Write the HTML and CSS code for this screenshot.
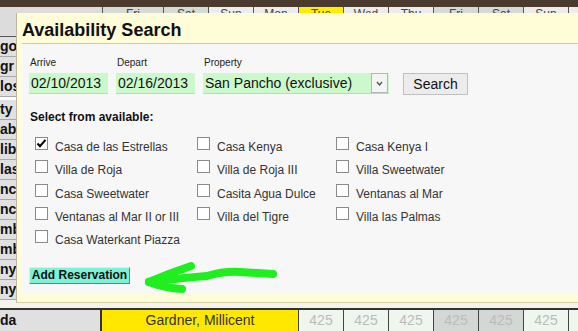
FILE: index.html
```
<!DOCTYPE html>
<html lang="en">

<head>
    <meta charset="utf-8" />
    <title>Availability Search</title>
    <link rel="stylesheet" href="styles.css">
</head>

<body>
    <div class="sheet">
        <div class="topbar"></div>
        <div class="head">
            <div class="corner"></div>
            <div class="day wide wk">Fri</div>
            <div class="day wk">Sat</div>
            <div class="day">Sun</div>
            <div class="day">Mon</div>
            <div class="day today">Tue</div>
            <div class="day">Wed</div>
            <div class="day">Thu</div>
            <div class="day wk">Fri</div>
            <div class="day wk">Sat</div>
            <div class="day">Sun</div>
            <div class="day"></div>
        </div>
        <div class="rows">
            <div class="row"><div class="name">go</div></div>
            <div class="row"><div class="name">gr</div></div>
            <div class="row"><div class="name">los</div></div>
            <div class="row group green"><div class="name">ty</div></div>
            <div class="row"><div class="name">ab</div></div>
            <div class="row"><div class="name">lib</div></div>
            <div class="row"><div class="name">las</div></div>
            <div class="row green"><div class="name">nc</div></div>
            <div class="row"><div class="name">nc</div></div>
            <div class="row"><div class="name">mb</div></div>
            <div class="row"><div class="name">mb</div></div>
            <div class="row green"><div class="name">nya</div></div>
            <div class="row"><div class="name">nya</div></div>
        </div>
        <div class="filler"></div>
        <div class="bottom">
            <div class="name">da</div>
            <div class="guest">Gardner, Millicent</div>
            <div class="rate">425</div>
            <div class="rate">425</div>
            <div class="rate">425</div>
            <div class="rate wk">425</div>
            <div class="rate wk">425</div>
            <div class="rate">425</div>
            <div class="rate">425</div>
        </div>
    </div>

    <div class="dialog">
        <h1 class="dialog-title">Availability Search</h1>
        <div class="panel">
            <div class="fields">
                <div class="field">
                    <label>Arrive</label>
                    <input class="date" type="text" value="02/10/2013">
                </div>
                <div class="field">
                    <label>Depart</label>
                    <input class="date" type="text" value="02/16/2013">
                </div>
                <div class="field">
                    <label>Property</label>
                    <div class="pick">
                        <select>
                            <option>San Pancho (exclusive)</option>
                        </select>
                        <span class="arrow">
                            <svg width="7" height="5" viewBox="0 0 7 5"><path d="M1 1 L3.5 4 L6 1" fill="none" stroke="#555" stroke-width="1.4"/></svg>
                        </span>
                    </div>
                </div>
                <button class="search">Search</button>
            </div>

            <div class="heading">Select from available:</div>
            <div class="choices">
                <label class="choice"><span class="box"><svg width="11" height="11" viewBox="0 0 11 11"><path d="M1.5 5.5 L4 8.2 L9.5 1.8" fill="none" stroke="#000" stroke-width="2"/></svg></span>Casa de las Estrellas</label>
                <label class="choice"><span class="box"></span>Casa Kenya</label>
                <label class="choice"><span class="box"></span>Casa Kenya I</label>
                <label class="choice"><span class="box"></span>Villa de Roja</label>
                <label class="choice"><span class="box"></span>Villa de Roja III</label>
                <label class="choice"><span class="box"></span>Villa Sweetwater</label>
                <label class="choice"><span class="box"></span>Casa Sweetwater</label>
                <label class="choice"><span class="box"></span>Casita Agua Dulce</label>
                <label class="choice"><span class="box"></span>Ventanas al Mar</label>
                <label class="choice"><span class="box"></span>Ventanas al Mar II or III</label>
                <label class="choice"><span class="box"></span>Villa del Tigre</label>
                <label class="choice"><span class="box"></span>Villa las Palmas</label>
                <label class="choice"><span class="box"></span>Casa Waterkant Piazza</label>
            </div>

            <button class="add">Add Reservation</button>
        </div>
    </div>

    <!-- marker scribbled on the screenshot -->
    <svg class="marker" width="145" height="40" viewBox="0 0 145 40">
        <g fill="none" stroke="#1fee1f" stroke-width="8" stroke-linecap="round" stroke-linejoin="round">
            <path d="M9 24 Q40 20 67 18 Q84 13 100 14 L133 16"/>
            <path d="M9 24 Q30 15 51 8"/>
            <path d="M9 24 Q25 30 42 31"/>
        </g>
    </svg>
</body>

</html>
```

FILE: styles.css
```
* {
    box-sizing: border-box;
}

html,
body {
    margin: 0;
    height: 100%;
}

body {
    width: 578px;
    height: 331px;
    position: relative;
    overflow: hidden;
    background: #fff;
    font-family: "Liberation Sans", Arial, sans-serif;
}

.sheet {
    height: 331px;
}

.topbar {
    height: 7px;
    background: #4b3a2e;
}

.head {
    display: flex;
    height: 30px;
    border-bottom: 1px solid #555;
}

.corner {
    width: 102px;
    flex: none;
    background: #dcdcdc;
}

.day {
    width: 45px;
    flex: none;
    border-left: 1px solid #555;
    background: #ececec;
    color: #444;
    font-size: 12px;
    line-height: 14px;
    text-align: center;
}

.day.wide {
    width: 61px;
}

.day.wk {
    background: #d6dad6;
}

.day.today {
    background: #ffee00;
}

.row {
    display: flex;
    height: 20px;
    border-bottom: 1px solid #a8a8a8;
}

.row.group {
    height: 23px;
    padding-top: 3px;
}

.row.green {
    border-bottom-color: #7cc47c;
}

.name {
    width: 102px;
    flex: none;
    background: #e0e0e0;
    border-right: 2px solid #333;
    color: #111;
    font-size: 14px;
    font-weight: bold;
    line-height: 19px;
    white-space: nowrap;
    overflow: hidden;
}

.filler {
    height: 8px;
    background: #f6f4ea;
}

.bottom {
    display: flex;
    height: 23px;
    border-top: 2px solid #333;
}

.bottom .name {
    line-height: 21px;
}

.guest {
    width: 196px;
    flex: none;
    background: #ffe800;
    color: #333;
    font-size: 14px;
    line-height: 21px;
    text-align: center;
}

.rate {
    width: 45px;
    flex: none;
    border-left: 1px solid #444;
    background: #eef6ee;
    color: #bbb;
    font-size: 14px;
    line-height: 21px;
    text-align: center;
}

.rate.wk {
    background: #d4d8d4;
}

/* dialog */

.dialog {
    position: absolute;
    left: 16px;
    top: 13px;
    width: 580px;
    height: 290px;
    background: #fffcd8;
    border-left: 1px solid #bdb79e;
    border-bottom: 1px solid #d6d0a8;
}

.dialog-title {
    margin: 0;
    padding: 6px 0 2px 5px;
    color: #111;
    font-size: 18px;
    font-weight: bold;
    line-height: 22px;
}

.panel {
    margin-left: 5px;
    height: 250px;
    padding: 13px 0 0 7px;
    background: #f7f7f7;
    border-top: 1px solid #cdc9b3;
}

.fields {
    display: flex;
    align-items: flex-end;
    gap: 8px;
}

.field {
    display: flex;
    flex-direction: column;
}

.field label {
    margin: 0 0 4px 1px;
    color: #222;
    font-size: 10px;
    line-height: 12px;
}

.date {
    width: 79px;
    height: 21px;
    padding: 0 2px;
    border: 0;
    border-bottom: 1px solid #b9dab9;
    background: #ccf9cc;
    color: #111;
    font: 14px "Liberation Sans", Arial, sans-serif;
    outline: none;
}

.pick {
    display: flex;
    align-items: center;
    width: 186px;
    height: 21px;
    background: #ccf9cc;
    border-bottom: 1px solid #b9dab9;
}

.pick select {
    flex: 1;
    height: 20px;
    padding: 0 2px;
    border: 0;
    background: transparent;
    color: #111;
    font: 14px "Liberation Sans", Arial, sans-serif;
    appearance: none;
    -webkit-appearance: none;
    outline: none;
}

.arrow {
    display: flex;
    align-items: center;
    justify-content: center;
    width: 17px;
    height: 20px;
    margin-right: 1px;
    border: 1px solid #b5b5b5;
    background: #f4f4f4;
}

.search {
    width: 65px;
    height: 22px;
    margin: 0 0 -1px 6px;
    padding: 0;
    border: 1px solid #c0c0c0;
    background: #ececec;
    color: #111;
    font: 14px "Liberation Sans", Arial, sans-serif;
}

.heading {
    margin: 16px 0 0 1px;
    color: #111;
    font-size: 12px;
    font-weight: bold;
    line-height: 14px;
}

.choices {
    display: grid;
    grid-template-columns: 162px 139px 1fr;
    grid-auto-rows: 23.25px;
    margin-top: 10px;
    padding-left: 6px;
}

.choice {
    display: flex;
    align-items: flex-start;
    color: #333;
    font-size: 12px;
    line-height: 14px;
    padding-top: 6px;
    white-space: nowrap;
}

.box {
    display: flex;
    align-items: center;
    justify-content: center;
    width: 13px;
    height: 13px;
    flex: none;
    margin: -3px 7px 0 0;
    border: 1px solid #8a8a8a;
    background: #fff;
}

.add {
    display: block;
    width: 101px;
    height: 17px;
    margin-top: 17px;
    padding: 0;
    border: 1px solid;
    border-color: #b8fff0 #4f8f80 #4f8f80 #b8fff0;
    background: #7ff2d6;
    color: #111;
    font: bold 12px "Liberation Sans", Arial, sans-serif;
    line-height: 15px;
}

.marker {
    position: absolute;
    left: 140px;
    top: 258px;
}
```
